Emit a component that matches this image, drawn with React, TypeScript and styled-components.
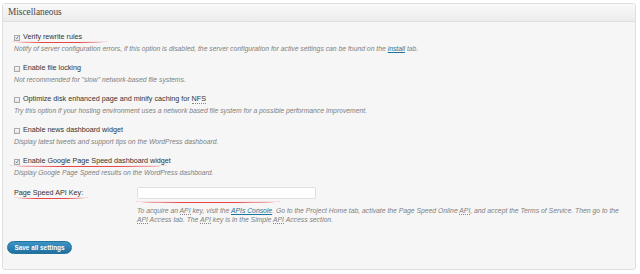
import React, { ReactElement, ReactNode } from 'react';
import styled, { createGlobalStyle } from 'styled-components';

const GlobalStyle = createGlobalStyle`
  html, body {
    margin: 0;
    padding: 0;
    background: #fff;
  }
  body {
    font-family: "Liberation Sans", Arial, sans-serif;
    color: #333;
  }
`;

const Panel = styled.div`
  margin: 3px 4px 0 2px;
  border: 1px solid #dfdfdf;
  border-radius: 3px;
  background: #f6f6f6;
  overflow: hidden;
`;

const PanelHeader = styled.h3`
  margin: 0;
  height: 17px;
  line-height: 17px;
  padding: 0 5px;
  font-family: "Liberation Serif", Georgia, serif;
  font-weight: normal;
  font-size: 9.3px;
  color: #464646;
  background: linear-gradient(to bottom, #f9f9f9, #ececec);
  border-bottom: 1px solid #dfdfdf;
`;

const PanelBody = styled.div`
  padding: 10px 0 15px;
`;

const OptionList = styled.div`
  padding-left: 11px;
`;

const Option = styled.div`
  margin-bottom: 10px;
`;

const OptionLabel = styled.label`
  position: relative;
  display: flex;
  align-items: center;
  gap: 3px;
  height: 10px;
  line-height: 10px;
  font-size: 7.2px;
  color: #333;
`;

const Description = styled.div`
  margin-top: 2px;
  font-size: 6.8px;
  line-height: 9px;
  font-style: italic;
  color: #808080;
`;

const Box = styled.span<{ $checked?: boolean }>`
  display: inline-flex;
  align-items: center;
  justify-content: center;
  width: 6px;
  height: 6px;
  box-sizing: border-box;
  border: 1px solid #a9a9a9;
  background: linear-gradient(to bottom, #fafafa, #e2e2e2);
  margin-top: 1px;
`;

const Mark = styled.span<{ $left: number; $top: number; $width: number }>`
  position: absolute;
  left: ${(p) => p.$left}px;
  top: ${(p) => p.$top}px;
  width: ${(p) => p.$width}px;
  height: 2px;
  border-bottom: 1px solid #e8474a;
  border-radius: 0 0 50% 50%;
  pointer-events: none;
`;

const Link = styled.a`
  color: #21759b;
  text-decoration: underline;
`;

const Abbr = styled.abbr`
  text-decoration: none;
  border-bottom: 1px dotted #888;
`;

const FieldRow = styled.div`
  display: grid;
  grid-template-columns: 123px 1fr;
  margin-top: 1px;
  padding-left: 11px;
`;

const FieldLabel = styled.div`
  position: relative;
  height: 12px;
  line-height: 12px;
  font-size: 7.2px;
  color: #333;
`;

const FieldCell = styled.div`
  position: relative;
`;

const TextInput = styled.input`
  display: block;
  box-sizing: border-box;
  width: 179px;
  height: 12px;
  margin: 0;
  padding: 0 2px;
  border: 1px solid #dfdfdf;
  border-radius: 2px;
  background: #fff;
  font-size: 7px;
`;

const Hint = styled.div`
  margin-top: 7px;
  max-width: 490px;
  font-size: 6.8px;
  line-height: 9px;
  font-style: italic;
  color: #808080;
`;

const SaveButton = styled.button`
  display: block;
  margin: 17px 0 0 4px;
  height: 13px;
  width: 65px;
  padding: 0;
  border: 1px solid #21759b;
  border-radius: 7px;
  background: linear-gradient(to bottom, #3d93c6, #21709f);
  color: #fff;
  font-family: "Liberation Sans", Arial, sans-serif;
  font-weight: bold;
  font-size: 6.4px;
  line-height: 11px;
`;

function Check({ checked }: { checked?: boolean }): ReactElement {
  return (
    <Box $checked={checked}>
      {checked && (
        <svg width="5" height="5" viewBox="0 0 10 10">
          <path d="M2 5.5 L4.2 8 L8.5 1.5" fill="none" stroke="#3f5f8a" strokeWidth="1.8" />
        </svg>
      )}
    </Box>
  );
}

type OptionProps = {
  label: ReactNode;
  description: ReactNode;
  checked?: boolean;
  mark?: { left: number; width: number };
};

function OptionItem({ label, description, checked, mark }: OptionProps): ReactElement {
  return (
    <Option>
      <OptionLabel>
        <Check checked={checked} />
        <span>{label}</span>
        {mark && <Mark $left={mark.left} $top={8} $width={mark.width} />}
      </OptionLabel>
      <Description>{description}</Description>
    </Option>
  );
}

export default function App(): ReactElement {
  return (
    <>
      <GlobalStyle />
      <Panel>
        <PanelHeader>Miscellaneous</PanelHeader>
        <PanelBody>
          <OptionList>
            <OptionItem
              checked
              mark={{ left: -2, width: 96 }}
              label="Verify rewrite rules"
              description={
                <>
                  Notify of server configuration errors, if this option is disabled, the server configuration for
                  active settings can be found on the <Link href="#">install</Link> tab.
                </>
              }
            />
            <OptionItem
              label="Enable file locking"
              description={'Not recommended for "slow" network-based file systems.'}
            />
            <OptionItem
              label={
                <>
                  Optimize disk enhanced page and minify caching for <Abbr>NFS</Abbr>
                </>
              }
              description="Try this option if your hosting environment uses a network based file system for a possible performance improvement."
            />
            <OptionItem
              label="Enable news dashboard widget"
              description="Display latest tweets and support tips on the WordPress dashboard."
            />
            <OptionItem
              checked
              mark={{ left: -4, width: 157 }}
              label="Enable Google Page Speed dashboard widget"
              description="Display Google Page Speed results on the WordPress dashboard."
            />
          </OptionList>
          <FieldRow>
            <FieldLabel>
              Page Speed API Key:
              <Mark $left={0} $top={9} $width={74} />
            </FieldLabel>
            <FieldCell>
              <TextInput type="text" />
              <Mark $left={-1} $top={13} $width={144} />
              <Hint>
                To acquire an <Abbr>API</Abbr> key, visit the <Link href="#">APIs Console</Link>. Go to the Project
                Home tab, activate the Page Speed Online <Abbr>API</Abbr>, and accept the Terms of Service. Then go
                to the <Abbr>API</Abbr> Access tab. The <Abbr>API</Abbr> key is in the Simple <Abbr>API</Abbr> Access
                section.
              </Hint>
            </FieldCell>
          </FieldRow>
          <SaveButton>Save all settings</SaveButton>
        </PanelBody>
      </Panel>
    </>
  );
}
